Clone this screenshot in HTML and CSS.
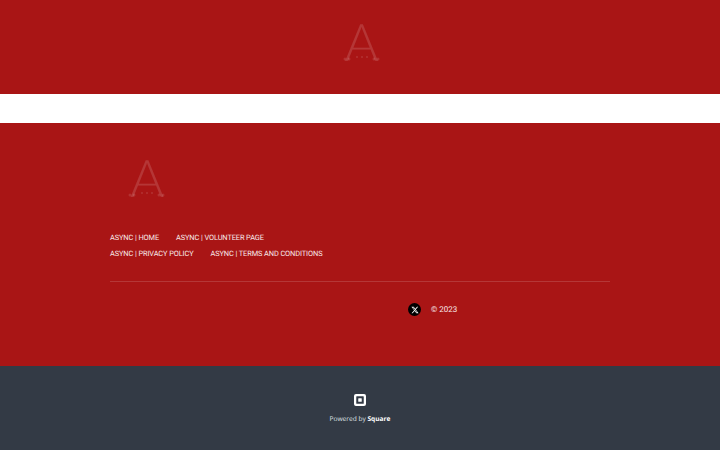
FILE: index.html
```html
<!DOCTYPE html>
<html lang="en">
<head>
    <meta charset="UTF-8">
    <meta name="viewport" content="width=device-width, initial-scale=1.0">
    <title>Async</title>
    <link rel="stylesheet" href="styles.css">
</head>
<body>
    <header class="hero">
        <div class="logo logo-top">
            <span class="logo-letter">A</span>
            <svg class="logo-dots" viewBox="0 0 38 6" width="38" height="6">
                <circle cx="2" cy="3" r="1.500"/><circle cx="6" cy="3" r="1.500"/>
                <circle cx="14" cy="1" r="1"/><circle cx="19" cy="1" r="1"/><circle cx="24" cy="1" r="1"/>
                <circle cx="31" cy="3" r="1.500"/><circle cx="35" cy="3" r="1.500"/>
            </svg>
        </div>
    </header>
    <div class="white-strip"></div>
    <footer class="site-footer">
        <div class="footer-inner">
            <div class="logo logo-footer">
                <span class="logo-letter">A</span>
                <svg class="logo-dots" viewBox="0 0 38 6" width="38" height="6">
                    <circle cx="2" cy="3" r="1.500"/><circle cx="6" cy="3" r="1.500"/>
                    <circle cx="14" cy="1" r="1"/><circle cx="19" cy="1" r="1"/><circle cx="24" cy="1" r="1"/>
                    <circle cx="31" cy="3" r="1.500"/><circle cx="35" cy="3" r="1.500"/>
                </svg>
            </div>
            <nav class="footer-links">
                <div class="link-row">
                    <a href="#">ASYNC | HOME</a>
                    <a href="#">ASYNC | VOLUNTEER PAGE</a>
                </div>
                <div class="link-row">
                    <a href="#">ASYNC | PRIVACY POLICY</a>
                    <a href="#">ASYNC | TERMS AND CONDITIONS</a>
                </div>
            </nav>
            <hr class="divider">
            <div class="social-row">
                <a href="#" class="x-icon" aria-label="X">
                    <svg viewBox="0 0 24 24" width="8" height="8"><path fill="#fff" d="M18.2 2.3h3.3l-7.2 8.2 8.5 11.2h-6.7l-5.2-6.8-6 6.8H1.7l7.700-8.800L1.300 2.300h6.800l4.700 6.200zm-1.200 17.400h1.800L7.100 4.200h-2z"/></svg>
                </a>
                <span class="copyright">© 2023</span>
            </div>
        </div>
    </footer>
    <section class="powered">
        <svg class="square-logo" viewBox="0 0 24 24" width="12" height="12">
            <path fill="#fff" fill-rule="evenodd" d="M4 0h16a4 4 0 0 1 4 4v16a4 4 0 0 1-4 4H4a4 4 0 0 1-4-4V4a4 4 0 0 1 4-4zm1.500 4.500a1 1 0 0 0-1 1v13a1 1 0 0 0 1 1h13a1 1 0 0 0 1-1v-13a1 1 0 0 0-1-1z"/>
            <rect fill="#fff" x="8.500" y="8.500" width="7" height="7" rx="1"/>
        </svg>
        <p class="powered-text">Powered by <strong>Square</strong></p>
    </section>
</body>
</html>
```

FILE: styles.css
```css
body {
    margin: 0;
    font-family: "Roboto", sans-serif;
    background-color: #fff;
    text-rendering: geometricPrecision;
}

.hero {
    height: 94px;
    background-color: #a91515;
    display: flex;
    justify-content: center;
    align-items: flex-start;
}
.logo {
    position: relative;
    width: 38px;
    height: 40px;
}
.logo-letter {
    display: block;
    font-family: "Lato", sans-serif;
    font-weight: 300;
    font-size: 52px;
    line-height: 40px;
    text-align: center;
    color: rgba(255, 255, 255, 0.14);
}
.logo-dots {
    position: absolute;
    left: 0;
    bottom: 0;
    fill: rgba(255, 255, 255, 0.12);
}
.logo-top {
    margin-top: 22px;
    margin-left: 3px;
}

.white-strip {
    height: 29px;
    background-color: #fff;
}

.site-footer {
    height: 243px;
    background-color: #a91515;
}
.footer-inner {
    width: 500px;
    margin: 0 auto;
    padding-top: 35px;
}
.logo-footer {
    margin-left: 18px;
    margin-bottom: 34px;
}

.footer-links {
    display: flex;
    flex-direction: column;
    gap: 5px;
}
.link-row {
    display: flex;
    gap: 17px;
    height: 11px;
    align-items: center;
}
.link-row a {
    font-size: 7.400px;
    letter-spacing: -0.100px;
    color: #f8eaea;
    text-decoration: none;
}

.divider {
    border: none;
    border-top: 1px solid rgba(255, 255, 255, 0.15);
    margin: 22px 0 0;
}

.social-row {
    display: flex;
    align-items: center;
    gap: 10px;
    padding-left: 298px;
    margin-top: 21px;
}
.x-icon {
    width: 13px;
    height: 13px;
    border-radius: 50%;
    background-color: #000;
    display: flex;
    align-items: center;
    justify-content: center;
}
.copyright {
    font-size: 8px;
    color: #f8eaea;
}

.powered {
    height: 84px;
    background-color: #333a45;
    display: flex;
    flex-direction: column;
    align-items: center;
    padding-top: 28px;
    box-sizing: border-box;
}
.square-logo {
    display: block;
}
.powered-text {
    margin: 8px 0 0;
    font-family: "Open Sans", sans-serif;
    font-size: 6.600px;
    line-height: 9px;
    color: #dfe1e4;
}
.powered-text strong {
    color: #fff;
}
```
